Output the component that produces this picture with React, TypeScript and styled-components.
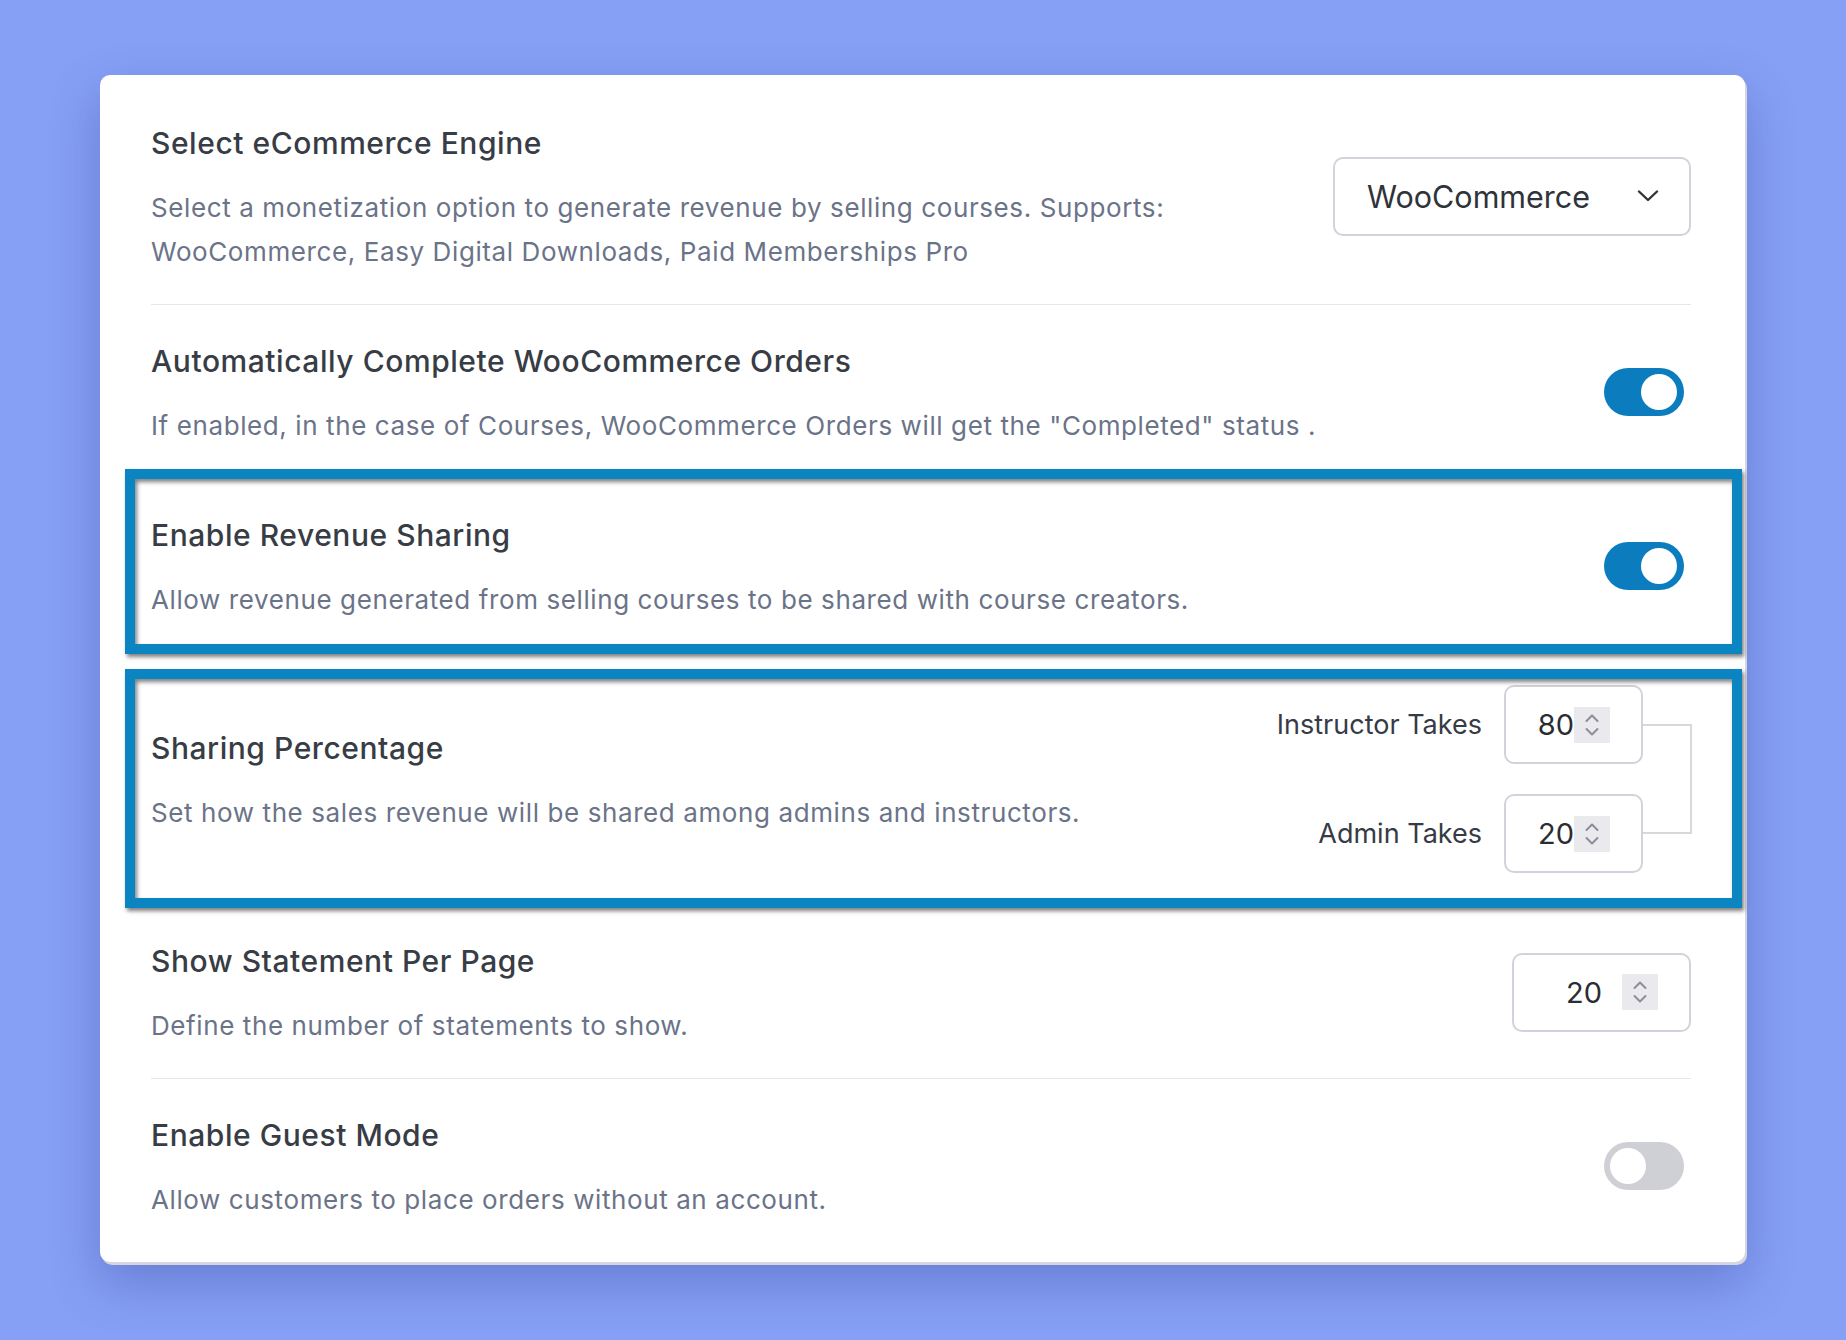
import React from "react";
import styled, { createGlobalStyle, css } from "styled-components";

const Global = createGlobalStyle`
  html, body { margin: 0; padding: 0; }
  body {
    background: #86a0f6;
    font-family: Inter, "Noto Sans", "Liberation Sans", sans-serif;
    -webkit-font-smoothing: antialiased;
  }
`;

const Page = styled.div`
  padding: 75px 101px 78px 100px;
`;

const Card = styled.div`
  background: #ffffff;
  border-radius: 10px;
  padding: 12px 54px 10px 51px;
  box-shadow: 2px 3px 0 #d5d6de, 0 20px 50px rgba(35, 50, 130, 0.32);
`;

type RowProps = { $last?: boolean; $mark?: { top: number; bottom: number } };

const Row = styled.div<RowProps>`
  position: relative;
  display: flex;
  align-items: center;
  justify-content: space-between;
  gap: 40px;
  padding: 31px 0 30px;
  border-bottom: ${(p) => (p.$last ? "none" : "1px solid #e4e6ea")};
  ${(p) =>
    p.$mark &&
    css`
      &::after {
        content: "";
        position: absolute;
        left: -26px;
        right: -51px;
        top: ${p.$mark.top}px;
        bottom: ${p.$mark.bottom}px;
        border: 10px solid #0b85c2;
        box-shadow: 2px 3px 4px rgba(0, 0, 0, 0.5),
          inset 2px 3px 4px rgba(0, 0, 0, 0.5);
        pointer-events: none;
      }
    `}
`;

const TextBlock = styled.div`
  display: flex;
  flex-direction: column;
  gap: 23px;
  padding-top: 5px;
`;

const Title = styled.div`
  font-size: 30px;
  font-weight: 500;
  line-height: 40px;
  letter-spacing: 0.55px;
  color: #373c45;
`;

const Desc = styled.div`
  font-size: 26px;
  font-weight: 400;
  line-height: 44px;
  letter-spacing: 0.6px;
  color: #6b7388;
`;

const Select = styled.div`
  width: 358px;
  height: 79px;
  box-sizing: border-box;
  border: 2px solid #d2d3da;
  border-radius: 10px;
  display: flex;
  align-items: center;
  justify-content: space-between;
  padding: 0 30px 0 32px;
  font-size: 30.5px;
  color: #2f333a;
  flex-shrink: 0;
`;

const Toggle = styled.div<{ $on?: boolean }>`
  width: 80px;
  height: 48px;
  border-radius: 24px;
  background: ${(p) => (p.$on ? "#0b7dbe" : "#cfd0d6")};
  display: flex;
  align-items: center;
  justify-content: ${(p) => (p.$on ? "flex-end" : "flex-start")};
  padding: 0 7px 0 6px;
  box-sizing: border-box;
  margin-right: 7px;
  flex-shrink: 0;
`;

const Knob = styled.div`
  width: 36px;
  height: 36px;
  border-radius: 50%;
  background: #ffffff;
`;

const NumberBox = styled.div<{ $w: number; $gap: number }>`
  width: ${(p) => p.$w}px;
  height: 79px;
  box-sizing: border-box;
  border: 2px solid #d2d3da;
  border-radius: 10px;
  display: flex;
  align-items: center;
  justify-content: flex-end;
  gap: ${(p) => p.$gap}px;
  padding-right: 31px;
  font-size: 29px;
  color: #2a2d33;
  flex-shrink: 0;
`;

const Spinner = styled.div`
  width: 36px;
  height: 36px;
  background: #e9e9ee;
  display: flex;
  align-items: center;
  justify-content: center;
`;

const Split = styled.div`
  display: grid;
  grid-template-columns: auto 139px 49px;
  grid-template-rows: 79px 79px;
  row-gap: 30px;
  align-items: center;
  flex-shrink: 0;
  margin: 1px -1px 1px 0;
`;

const SplitLabel = styled.div`
  font-size: 27px;
  color: #363b45;
  text-align: right;
  padding-right: 22px;
`;

const Bracket = styled.div`
  grid-column: 3;
  grid-row: 1 / span 2;
  align-self: stretch;
  margin: 39px 0 39px 0;
  border: 2px solid #d8d8dc;
  border-left: none;
`;

const Chevron = () => (
  <svg width="22" height="12" viewBox="0 0 22 12" fill="none">
    <path d="M2 1.5 L11 10 L20 1.5" stroke="#2f333a" strokeWidth="2.4" strokeLinecap="round" strokeLinejoin="round" />
  </svg>
);

const Arrows = () => (
  <svg width="16" height="28" viewBox="0 0 16 28" fill="none">
    <path d="M2.5 10 L8 4.5 L13.5 10" stroke="#8c8c9b" strokeWidth="2" strokeLinecap="round" strokeLinejoin="round" />
    <path d="M2.5 18 L8 23.5 L13.5 18" stroke="#8c8c9b" strokeWidth="2" strokeLinecap="round" strokeLinejoin="round" />
  </svg>
);

const NumberField = ({ value, w, gap }: { value: string; w: number; gap: number }) => (
  <NumberBox $w={w} $gap={gap}>
    <span>{value}</span>
    <Spinner>
      <Arrows />
    </Spinner>
  </NumberBox>
);

export default function App() {
  return (
    <>
      <Global />
      <Page>
        <Card>
          <Row>
            <TextBlock>
              <Title>Select eCommerce Engine</Title>
              <Desc>
                Select a monetization option to generate revenue by selling courses. Supports:
                <br />
                WooCommerce, Easy Digital Downloads, Paid Memberships Pro
              </Desc>
            </TextBlock>
            <Select>
              <span>WooCommerce</span>
              <Chevron />
            </Select>
          </Row>
          <Row>
            <TextBlock>
              <Title>Automatically Complete WooCommerce Orders</Title>
              <Desc>If enabled, in the case of Courses, WooCommerce Orders will get the "Completed" status .</Desc>
            </TextBlock>
            <Toggle $on>
              <Knob />
            </Toggle>
          </Row>
          <Row $mark={{ top: -10, bottom: -2 }}>
            <TextBlock>
              <Title>Enable Revenue Sharing</Title>
              <Desc>Allow revenue generated from selling courses to be shared with course creators.</Desc>
            </TextBlock>
            <Toggle $on>
              <Knob />
            </Toggle>
          </Row>
          <Row $mark={{ top: 16, bottom: -4 }}>
            <TextBlock>
              <Title>Sharing Percentage</Title>
              <Desc>Set how the sales revenue will be shared among admins and instructors.</Desc>
            </TextBlock>
            <Split>
              <SplitLabel>Instructor Takes</SplitLabel>
              <NumberField value="80" w={139} gap={0} />
              <Bracket />
              <SplitLabel>Admin Takes</SplitLabel>
              <NumberField value="20" w={139} gap={0} />
            </Split>
          </Row>
          <Row>
            <TextBlock>
              <Title>Show Statement Per Page</Title>
              <Desc>Define the number of statements to show.</Desc>
            </TextBlock>
            <NumberField value="20" w={179} gap={20} />
          </Row>
          <Row $last>
            <TextBlock>
              <Title>Enable Guest Mode</Title>
              <Desc>Allow customers to place orders without an account.</Desc>
            </TextBlock>
            <Toggle>
              <Knob />
            </Toggle>
          </Row>
        </Card>
      </Page>
    </>
  );
}
